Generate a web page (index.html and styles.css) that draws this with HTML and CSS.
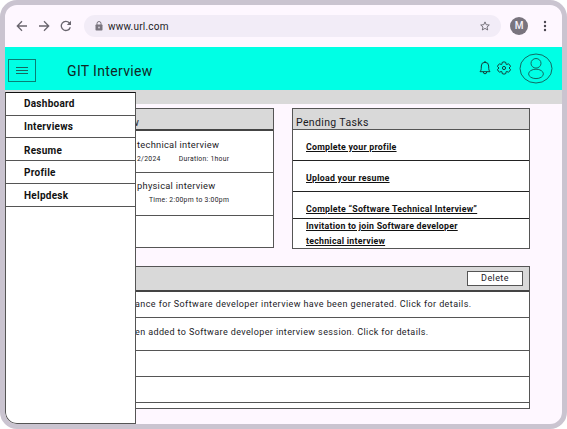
FILE: index.html
```html
<!DOCTYPE html>
<html lang="en">
<head>
<meta charset="utf-8">
<title>GIT Interview</title>
<link rel="stylesheet" href="styles.css">
</head>
<body>
<div class="window">
  <div class="browser-bar">
    <svg class="nav" viewBox="0 0 12 12"><path d="M11 6H1.500M6 1.300L1.300 6L6 10.700"/></svg>
    <svg class="nav" viewBox="0 0 12 12"><path d="M1 6h9.500M6 1.300L10.700 6L6 10.700"/></svg>
    <svg class="nav" viewBox="0 0 12 12"><path d="M10.300 7.200A4.600 4.600 0 1 1 9.300 2.800L10.500 4"/><path d="M11 .8V5H6.800z" class="solid"/></svg>
    <div class="address">
      <svg class="lock" viewBox="0 0 8 10"><rect x=".5" y="3.500" width="7" height="6" rx=".8"/><path d="M2 4V2.500a2 2 0 0 1 4 0V4"/><circle cx="4" cy="6.500" r=".9"/></svg>
      <span class="url">www.url.com</span>
      <svg class="star" viewBox="0 0 10 10"><path d="M5 .9L6.200 3.700L9.300 4L7 6L7.700 9L5 7.400L2.300 9L3 6L.7 4L3.800 3.700z"/></svg>
    </div>
    <div class="avatar">M</div>
    <svg class="dots" viewBox="0 0 4 12"><circle cx="2" cy="2" r="1.200"/><circle cx="2" cy="6" r="1.200"/><circle cx="2" cy="10" r="1.200"/></svg>
  </div>

  <header class="app-bar">
    <div class="menu-button"><svg viewBox="0 0 12 9"><path d="M0 1.500h12M0 4.500h12M0 7.500h12"/></svg></div>
    <h1>GIT Interview</h1>
    <svg class="bell" viewBox="0 0 12 14"><path d="M1 10.700C2 9.600 2.300 8.500 2.300 6V5a3.700 3.700 0 0 1 7.400 0v1c0 2.500.3 3.600 1.300 4.700zM4.300 10.900a1.700 1.900 0 0 0 3.400 0M5.300 1.300a.7.700 0 0 1 1.400 0"/></svg>
    <svg class="gear" viewBox="0 0 14 14"><path d="M5.200 1.400Q7 .3 8.800 1.400L9.100 3.300L9.400 3.500L11.500 2.900Q13.300 3.900 13.500 5.600L12 7L13.500 8.400Q13.300 10.100 11.500 11.100L9.400 10.500L9.100 10.700L8.800 12.600Q7 13.700 5.200 12.600L4.900 10.700L4.600 10.500L2.500 11.100Q.7 10.100 .5 8.400L2 7L.5 5.600Q.7 3.900 2.500 2.900L4.600 3.500L4.900 3.300z"/><circle cx="7" cy="7" r="1.600"/></svg>
    <svg class="profile" viewBox="0 0 34 31"><ellipse cx="17" cy="15.500" rx="16" ry="14.500"/><ellipse cx="17" cy="10.300" rx="5" ry="4.800"/><ellipse cx="17" cy="20.900" rx="7.400" ry="4.700"/></svg>
  </header>

  <div class="strip"></div>

  <main>
    <section class="panel upcoming">
      <h2>w</h2>
      <div class="row"><p class="name">technical interview</p><p class="meta"><span>2/2024</span><span class="duration">Duration: 1hour</span></p></div>
      <div class="row"><p class="name">physical interview</p><p class="meta"><span class="time">Time: 2:00pm to 3:00pm</span></p></div>
      <div class="row"></div>
    </section>
    <section class="panel tasks">
      <h2>Pending Tasks</h2>
      <div class="row"><a>Complete your profile</a></div>
      <div class="row"><a>Upload your resume</a></div>
      <div class="row"><a>Complete “Software Technical Interview”</a></div>
      <div class="row"><a>Invitation to join Software developer<br>technical interview</a></div>
    </section>
    <section class="panel notices">
      <div class="notice-head"><button>Delete</button></div>
      <div class="row">ance for Software developer interview have been generated. Click for details.</div>
      <div class="row">en added to Software developer interview session. Click for details.</div>
      <div class="row"></div>
      <div class="row"></div>
      <div class="row"></div>
    </section>
  </main>

  <nav class="drawer">
    <a>Dashboard</a>
    <a>Interviews</a>
    <a>Resume</a>
    <a>Profile</a>
    <a>Helpdesk</a>
  </nav>
</div>
</body>
</html>
```
FILE: styles.css
```css
* { box-sizing: border-box; margin: 0; padding: 0; }
body { width: 567px; height: 429px; overflow: hidden; background: #fff; font-family: Roboto, sans-serif; color: #1c1b1f; }
svg { display: block; fill: none; stroke: #49454f; flex: none; }

.window { position: relative; width: 567px; height: 429px; border: 5px solid #cac4d0; border-radius: 17px; background: #fef7ff; overflow: hidden; }

.browser-bar { display: flex; align-items: center; height: 42px; padding-left: 11px; }
.nav { width: 12px; height: 12px; margin-right: 10px; stroke: #69656e; stroke-width: 1.3; }
.nav .solid { fill: #69656e; stroke: none; }
.address { display: flex; align-items: center; width: 417px; height: 22px; margin-left: 2px; padding: 0 11px; border-radius: 11px; background: #f2ecf7; }
.lock { width: 8px; height: 10px; stroke: #79747e; stroke-width: 1; }
.lock rect { fill: #79747e; stroke: none; }
.lock circle { fill: #d8d2dc; stroke: none; }
.url { margin-left: 5px; font-size: 10px; letter-spacing: 0.22px; flex: 1; }
.star { width: 10px; height: 10px; stroke: #69656e; stroke-width: 0.9; }
.avatar { width: 18px; height: 18px; margin-left: 9px; border-radius: 50%; background: #79747e; color: #f7f2fa; font-size: 10px; font-weight: 500; line-height: 18px; text-align: center; }
.dots { width: 4px; height: 12px; margin-left: 15px; fill: #49454f; stroke: none; }

.app-bar { display: flex; align-items: center; height: 43px; padding: 0 9px 0 3px; background: #00ffe5; }
.menu-button { display: flex; align-items: center; justify-content: center; width: 28px; height: 23px; margin-top: 4px; border: 1px solid #087f75; }
.menu-button svg { width: 12px; height: 9px; stroke: #17665f; stroke-width: 1; }
.app-bar h1 { flex: 1; margin: 4px 0 0 31px; font-size: 14px; font-weight: 400; letter-spacing: 0.34px; color: #112725; }
.bell { width: 12px; height: 14px; margin-top: -1px; stroke: #153f3b; stroke-width: 1; }
.gear { width: 14px; height: 14px; margin: -2px 0 0 6px; stroke: #153f3b; stroke-width: 1; }
.profile { width: 34px; height: 31px; margin: -1px 0 0 8px; stroke: #126a63; stroke-width: 1; }

.strip { height: 14px; background: #d9d9d9; }

main { display: grid; grid-template-columns: 139px 238px; column-gap: 18px; row-gap: 17px; padding: 4px 0 0 130px; align-items: start; }
.panel { border: 1px solid #555; background: #fff; }
.panel h2 { border-bottom: 1px solid #555; background: #d9d9d9; font-size: 10.5px; font-weight: 400; letter-spacing: 0.36px; line-height: 13px; }
.row { border-bottom: 1px solid #555; }
.panel .row:last-child { border-bottom: 0; }

.upcoming { height: 140px; border-left: 0; }
.upcoming h2 { height: 22px; padding-top: 7px; border-bottom: 2px solid #444; text-indent: -4px; }
.upcoming .row { height: 42px; padding: 8px 0 0 2px; }
.upcoming .row + .row { height: 43px; padding-top: 7px; }
.name { font-size: 9.3px; line-height: 12px; letter-spacing: 0.27px; white-space: nowrap; }
.meta { display: flex; margin-top: 3px; font-size: 6.8px; line-height: 9px; letter-spacing: 0.29px; white-space: nowrap; }
.upcoming .row:nth-child(3) .meta { margin-top: 4px; }
.upcoming .row:nth-child(2) .meta { margin-top: 4px; }
.duration { margin-left: 18px; }
.time { margin-left: 12px; }

.tasks { height: 141px; }
.tasks h2 { height: 21px; padding: 7px 0 0 3px; }
.tasks .row { height: 31px; padding: 11px 0 0 13px; border-bottom: 1px solid #222; color: #111; font-size: 8.8px; font-weight: 700; line-height: 13px; letter-spacing: 0.24px; white-space: nowrap; text-decoration: underline; }
.tasks .row:nth-child(4) { height: 27px; }
.tasks .row:nth-child(5) { height: 29px; padding-top: 0; line-height: 15px; }

.notices { grid-column: 1 / -1; height: 143px; border-left: 0; }
.notice-head { display: flex; justify-content: flex-end; align-items: center; height: 25px; padding-right: 6px; border-bottom: 2px solid #444; background: #d9d9d9; }
.notice-head button { width: 56px; height: 15px; border: 1px solid #555; background: #fff; color: #1c1b1f; font: 400 9px/13px Roboto, sans-serif; letter-spacing: 0.4px; }
.notices .row { height: 26px; font-size: 9px; line-height: 25px; letter-spacing: 0.41px; white-space: nowrap; }
.notices .row:nth-child(3) { height: 33px; line-height: 28px; letter-spacing: 0.39px; }
.notices .row:last-child { height: 5px; }

.drawer { position: absolute; left: 0; top: 87px; width: 131px; height: 332px; border: 1px solid #555; border-top-color: #111; border-bottom-left-radius: 12px; background: #fff; }
.drawer a { display: block; height: 22px; padding-left: 18px; border-bottom: 1px solid #555; color: #111; font-size: 10px; font-weight: 700; line-height: 22px; letter-spacing: 0.26px; }
.drawer a:nth-child(1) { height: 23px; line-height: 21px; }
.drawer a:nth-child(3) { height: 23px; line-height: 25px; }
.drawer a:nth-child(4), .drawer a:nth-child(5) { height: 23px; line-height: 24px; }
```
